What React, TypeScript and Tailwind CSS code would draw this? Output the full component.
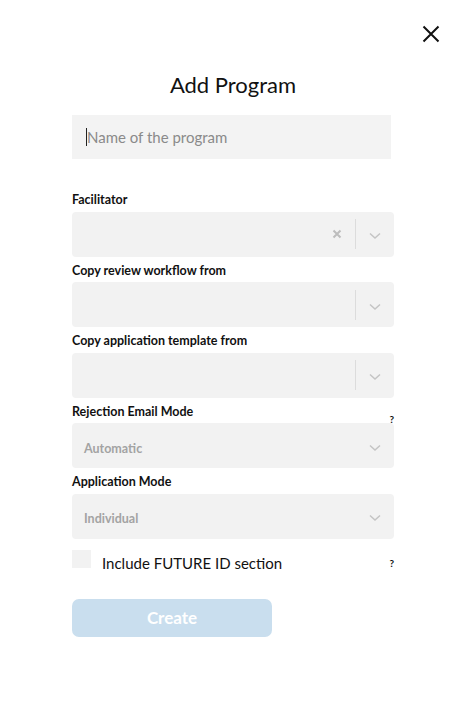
import * as React from "react"

const Chevron: React.FC = () => (
  <svg width="12" height="8" viewBox="0 0 12 8" fill="none" className="text-[#c4c4c4]">
    <path d="M1 1.5L6 6L11 1.5" stroke="currentColor" strokeWidth="1.5" />
  </svg>
)

const Help: React.FC = () => (
  <span className="block text-[10px] font-bold leading-none text-[#111]">?</span>
)

type SelectProps = {
  value?: string
  clearable?: boolean
  separator?: boolean
}

const Select: React.FC<SelectProps> = ({ value, clearable, separator }) => (
  <div className="flex h-[45px] w-[322px] items-center rounded-[4px] bg-[#f2f2f2]">
    <div className="flex-1 pl-3 pt-[7px] text-[12.5px] font-bold text-[#a3a3a3]">{value}</div>
    {clearable && (
      <svg width="10" height="10" viewBox="0 0 10 10" className="mr-[13px] text-[#bdbdbd]">
        <path d="M1.5 1.5L8.5 8.5M8.5 1.5L1.5 8.5" stroke="currentColor" strokeWidth="2" />
      </svg>
    )}
    {separator && <div className="h-[30px] w-px bg-[#dcdcdc]" />}
    <div className="flex w-[38px] items-center justify-center pt-[4px]">
      <Chevron />
    </div>
  </div>
)

const Label: React.FC<{ text: string; help?: boolean }> = ({ text, help }) => (
  <div className="mb-[3.5px] mt-[6px] flex h-4 items-end justify-between leading-none">
    <span className="text-[12.5px] font-bold leading-4 text-[#111]">{text}</span>
    {help && (
      <span className="-mb-[4px] mr-0">
        <Help />
      </span>
    )}
  </div>
)

export default function App() {
  return (
    <div
      className="relative min-h-[709px] w-full bg-white"
      style={{ fontFamily: "Lato, 'Open Sans', sans-serif" }}
    >
      <button className="absolute right-[22px] top-[24px] text-[#111]">
        <svg width="20" height="20" viewBox="0 0 20 20" fill="none">
          <path d="M2.5 2.5L17.5 17.5M17.5 2.5L2.5 17.5" stroke="currentColor" strokeWidth="2" />
        </svg>
      </button>

      <div className="ml-[72px] flex w-[322px] flex-col pt-[71px]">
        <h1 className="w-[322px] text-center text-[22px] leading-[28px] text-[#111]">
          Add Program
        </h1>

        <div className="mt-4 flex h-[44px] w-[319px] items-center bg-[#f3f3f3] pl-[14px]">
          <span className="h-[18px] w-px bg-[#222]" />
          <input
            className="flex-1 bg-transparent text-[15px] text-[#333] outline-none placeholder:text-[#8a8a8a]"
            placeholder="Name of the program"
          />
        </div>

        <div className="mt-[27px]">
          <Label text="Facilitator" />
          <Select clearable separator />
          <Label text="Copy review workflow from" />
          <Select separator />
          <Label text="Copy application template from" />
          <Select separator />
          <Label text="Rejection Email Mode" help />
          <Select value="Automatic" />
          <Label text="Application Mode" />
          <Select value="Individual" />
        </div>

        <div className="mt-[11px] flex items-start justify-between leading-none">
          <div className="flex items-start">
            <span className="h-[18px] w-[19px] bg-[#f2f2f2]" />
            <span className="ml-[11px] mt-[3px] text-[15px] leading-5 text-[#111]">
              Include FUTURE ID section
            </span>
          </div>
          <span className="mt-[8px]">
            <Help />
          </span>
        </div>

        <button className="mt-[26px] h-[38px] w-[200px] rounded-[7px] bg-[#c9deee] text-[17px] font-bold text-white">
          Create
        </button>
      </div>
    </div>
  )
}
